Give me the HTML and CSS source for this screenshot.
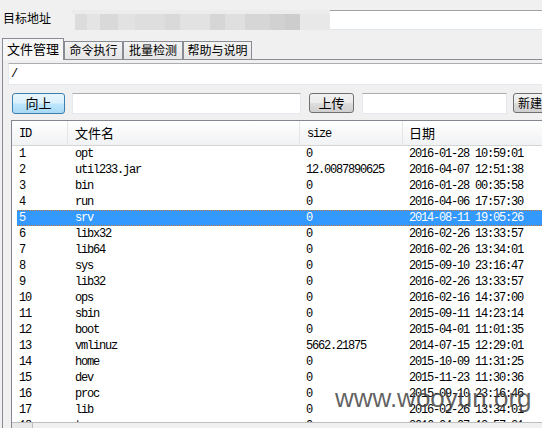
FILE: index.html
```html
<!DOCTYPE html>
<html lang="zh-CN">
<head>
<meta charset="utf-8">
<title>文件管理</title>
<link rel="stylesheet" href="styles.css">
</head>
<body>
<div class="addr">
  <span class="lbl">目标地址</span>
  <div class="blur">
    <i class="k1"></i><i class="k2"></i><i class="k3"></i><i class="k4"></i><i class="k5"></i><i class="k6"></i><i class="k7"></i><i class="k8"></i><i class="k9"></i><i class="k10"></i><i class="k11"></i><i class="k12"></i><i class="k13"></i><i class="k14"></i>
  </div>
  <div class="addr-field"></div>
</div>

<div class="tabs">
  <div class="tab active t1">文件管理</div>
  <div class="tab t2">命令执行</div>
  <div class="tab t3">批量检测</div>
  <div class="tab t4">帮助与说明</div>
</div>

<div class="panel">
  <div class="path">/</div>
  <div class="toolbar">
    <button class="btn blue up">向上</button>
    <div class="field f1"></div>
    <button class="btn gray upl">上传</button>
    <div class="field f2"></div>
    <button class="btn gray new">新建</button>
  </div>
  <div class="table">
    <div class="thead">
      <span class="mono">ID</span><span>文件名</span><span class="mono">size</span><span>日期</span>
    </div>
    <div class="tbody">
      <div class="row"><span>1</span><span>opt</span><span>0</span><span>2016-01-28 10:59:01</span></div>
      <div class="row"><span>2</span><span>util233.jar</span><span>12.0087890625</span><span>2016-04-07 12:51:38</span></div>
      <div class="row"><span>3</span><span>bin</span><span>0</span><span>2016-01-28 00:35:58</span></div>
      <div class="row"><span>4</span><span>run</span><span>0</span><span>2016-04-06 17:57:30</span></div>
      <div class="row sel"><span>5</span><span>srv</span><span>0</span><span>2014-08-11 19:05:26</span></div>
      <div class="row"><span>6</span><span>libx32</span><span>0</span><span>2016-02-26 13:33:57</span></div>
      <div class="row"><span>7</span><span>lib64</span><span>0</span><span>2016-02-26 13:34:01</span></div>
      <div class="row"><span>8</span><span>sys</span><span>0</span><span>2015-09-10 23:16:47</span></div>
      <div class="row"><span>9</span><span>lib32</span><span>0</span><span>2016-02-26 13:33:57</span></div>
      <div class="row"><span>10</span><span>ops</span><span>0</span><span>2016-02-16 14:37:00</span></div>
      <div class="row"><span>11</span><span>sbin</span><span>0</span><span>2015-09-11 14:23:14</span></div>
      <div class="row"><span>12</span><span>boot</span><span>0</span><span>2015-04-01 11:01:35</span></div>
      <div class="row"><span>13</span><span>vmlinuz</span><span>5662.21875</span><span>2014-07-15 12:29:01</span></div>
      <div class="row"><span>14</span><span>home</span><span>0</span><span>2015-10-09 11:31:25</span></div>
      <div class="row"><span>15</span><span>dev</span><span>0</span><span>2015-11-23 11:30:36</span></div>
      <div class="row"><span>16</span><span>proc</span><span>0</span><span>2015-09-10 23:16:46</span></div>
      <div class="row"><span>17</span><span>lib</span><span>0</span><span>2016-02-26 13:34:01</span></div>
      <div class="row"><span>18</span><span>tmp</span><span>0</span><span>2016-04-07 12:57:31</span></div>
    </div>
    <div class="hscroll"><span class="sbtn"></span></div>
  </div>
</div>

<div class="watermark">www.wooyun.org</div>
</body>
</html>
```

FILE: styles.css
```css
* { box-sizing: border-box; }

html, body {
  margin: 0;
  width: 542px;
  height: 428px;
  overflow: hidden;
}

body {
  position: relative;
  background: #f0f0f0;
  font-family: "Noto Sans CJK SC", "Liberation Sans", sans-serif;
  font-size: 12px;
  color: #000;
}

/* address row */
.addr {
  display: flex;
  align-items: flex-start;
  padding: 10px 0 0 3px;
  height: 30px;
}
.lbl {
  width: 69px;
  flex-shrink: 0;
  line-height: 16px;
  font-size: 12px;
}
.blur {
  display: flex;
  flex-shrink: 0;
  height: 20px;
  padding-top: 4px;
  background: #ececec;
  width: 258px;
}
.blur i { display: block; height: 16px; }
.k1 { width: 3px; background: #f0f0f0; }
.k2 { width: 12px; background: #dcdcdc; }
.k3 { width: 13px; background: #e4e4e4; }
.k4 { width: 18px; background: #d9d9d9; }
.k5 { width: 17px; background: #e2e2e2; }
.k6 { width: 30px; background: #dedede; }
.k7 { width: 15px; background: #d9d9d9; }
.k8 { width: 30px; background: #e2e2e2; }
.k9 { width: 15px; background: #d6d6d6; }
.k10 { width: 20px; background: #dfdfdf; }
.k11 { width: 25px; background: #d6d6d6; }
.k12 { width: 15px; background: #d1d1d1; }
.k13 { width: 15px; background: #cdcdcd; }
.k14 { width: 30px; background: #e8e8e8; }
.addr-field {
  flex: 1;
  height: 20px;
  background: #fff;
  border-top: 1px solid #a3a3a3;
  border-bottom: 1px solid #dfe6ee;
}

/* tabs */
.tabs {
  display: flex;
  align-items: flex-end;
  height: 29px;
  padding-left: 2px;
}
.tab {
  position: relative;
  flex-shrink: 0;
  height: 18px;
  border: 1px solid #898c95;
  border-bottom: none;
  background: linear-gradient(#f3f3f3, #e6e6e6);
  font-size: 12px;
  line-height: 16px;
  text-align: center;
}
.tab.active {
  z-index: 1;
  height: 22px;
  margin-bottom: -1px;
  background: #f7f7f7;
  line-height: 20px;
  font-size: 13px;
}
.t1 { width: 62px; }
.t2 { width: 59px; }
.t3 { width: 60px; }
.t4 { width: 69px; }

/* panel */
.panel {
  margin-left: 2px;
  border-top: 1px solid #898c95;
  border-left: 1px solid #898c95;
  height: 380px;
}
.path {
  margin: 3px 0 0 5px;
  height: 22px;
  background: #fff;
  border: 1px solid #e3e9ef;
  border-top-color: #abadb3;
  border-right: none;
  padding-left: 2px;
  font-family: "Liberation Mono", monospace;
  font-size: 12px;
  line-height: 20px;
}

.toolbar {
  display: flex;
  align-items: center;
  height: 22px;
  margin-top: 7px;
  padding-left: 9px;
  overflow: hidden;
}
.toolbar > * { flex-shrink: 0; }
.btn {
  height: 21px;
  padding: 0;
  font-family: "Noto Sans CJK SC", sans-serif;
  font-size: 13px;
  line-height: 18px;
  border-radius: 3px;
  color: #000;
}
.btn.blue {
  border: 1px solid #3c7fb1;
  background: linear-gradient(#eaf6fd 0%, #d9f0fc 48%, #bee6fd 52%, #a7d9f5 100%);
}
.btn.gray {
  border: 1px solid #707070;
  background: linear-gradient(#f2f2f2 0%, #ebebeb 48%, #dddddd 52%, #cfcfcf 100%);
}
.up { width: 53px; }
.upl { width: 45px; margin-left: 8px; height: 20px; }
.new {
  width: 45px;
  margin-left: 6px;
  height: 20px;
  padding-left: 4px;
  text-align: left;
  font-size: 12px;
}
.field {
  height: 21px;
  background: #fff;
  border: 1px solid #e3e9ef;
  border-top-color: #abadb3;
}
.f1 { width: 229px; margin-left: 7px; }
.f2 { width: 145px; margin-left: 8px; }

/* table */
.table {
  margin: 6px 0 0 8px;
  border-top: 1px solid #828790;
  border-left: 1px solid #828790;
  background: #fff;
  font-family: "Liberation Mono", monospace;
  font-size: 12px;
  letter-spacing: -1.2px;
}
.thead {
  display: grid;
  grid-template-columns: 56px 232px 103px 1fr;
  height: 25px;
  background: linear-gradient(#ffffff, #f1f2f4);
  border-bottom: 1px solid #d5d5d5;
}
.thead span {
  padding-left: 7px;
  line-height: 24px;
  border-right: 1px solid #e5e5e5;
  font-family: "Noto Sans CJK SC", sans-serif;
  font-size: 13px;
  letter-spacing: 0;
}
.thead span.mono {
  font-family: "Liberation Mono", monospace;
  font-size: 12px;
  letter-spacing: -1.2px;
  padding-top: 1px;
}
.thead span:last-child { padding-left: 6px; border-right: none; }

.tbody {
  height: 276px;
  overflow: hidden;
}
.row {
  display: grid;
  grid-template-columns: 51px 232px 103px 1fr;
  margin-left: 5px;
  height: 16px;
  line-height: 16px;
  white-space: nowrap;
}
.row span:nth-child(1) { padding-left: 2px; }
.row span:nth-child(2) { padding-left: 7px; }
.row span:nth-child(3) { padding-left: 6px; }
.row span:nth-child(4) { padding-left: 6px; }
.row.sel {
  background: #3399ff;
  color: #fff;
  border-top: 1px dotted #c8783a;
  border-bottom: 1px dotted #c8783a;
  line-height: 14px;
}

.hscroll {
  height: 17px;
  background: #f0f0f0;
  border-top: 1px solid #bdbdbd;
}
.sbtn {
  display: block;
  width: 21px;
  height: 16px;
  border-right: 1px solid #bdbdbd;
  background: #e8e8e8;
}

.watermark {
  position: absolute;
  left: 335px;
  top: 385px;
  font-family: "Liberation Sans", Arial, sans-serif;
  font-size: 26px;
  line-height: 26px;
  color: rgba(70, 70, 70, 0.85);
  white-space: nowrap;
}
```
